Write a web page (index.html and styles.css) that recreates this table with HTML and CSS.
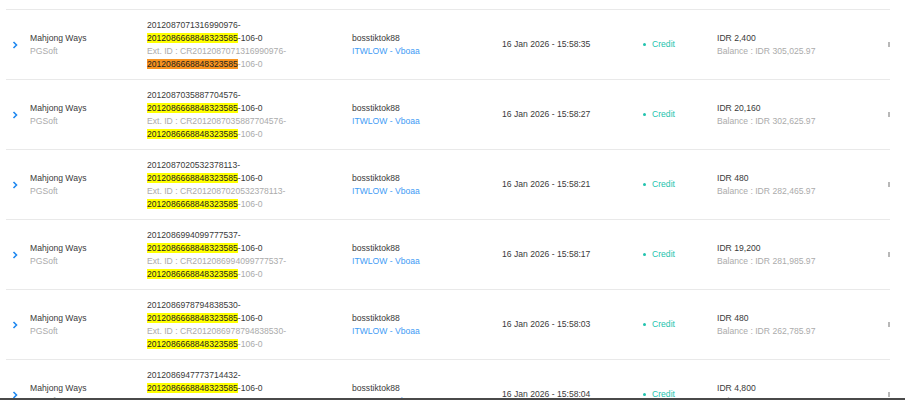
FILE: index.html
```html
<!DOCTYPE html>
<html>
<head>
<meta charset="utf-8">
<link rel="stylesheet" href="styles.css">
</head>
<body>
<div class="viewport">
  <div class="table">
    <div class="row">
      <div class="cell expand"><svg class="chev" viewBox="0 0 6 8" width="6" height="8"><polyline points="1.5,1 4.5,4 1.5,7" fill="none" stroke="#1e88f0" stroke-width="1.6"/></svg></div>
      <div class="cell"><div class="main">Mahjong Ways</div><div class="sub">PGSoft</div></div>
      <div class="cell"><div class="main">2012087071316990976-<br><mark>2012086668848323585</mark>-106-0</div><div class="sub">Ext. ID : CR2012087071316990976-<br><mark class="orange">2012086668848323585</mark>-106-0</div></div>
      <div class="cell"><div class="main">bosstiktok88</div><div class="link">ITWLOW - Vboaa</div></div>
      <div class="cell"><div class="main">16 Jan 2026 - 15:58:35</div></div>
      <div class="cell"><div class="status"><span class="dot"></span>Credit</div></div>
      <div class="cell"><div class="main">IDR 2,400</div><div class="sub">Balance : IDR 305,025.97</div></div>
      <div class="cell"><span class="action"></span></div>
    </div>
    <div class="row">
      <div class="cell expand"><svg class="chev" viewBox="0 0 6 8" width="6" height="8"><polyline points="1.5,1 4.5,4 1.5,7" fill="none" stroke="#1e88f0" stroke-width="1.6"/></svg></div>
      <div class="cell"><div class="main">Mahjong Ways</div><div class="sub">PGSoft</div></div>
      <div class="cell"><div class="main">2012087035887704576-<br><mark>2012086668848323585</mark>-106-0</div><div class="sub">Ext. ID : CR2012087035887704576-<br><mark>2012086668848323585</mark>-106-0</div></div>
      <div class="cell"><div class="main">bosstiktok88</div><div class="link">ITWLOW - Vboaa</div></div>
      <div class="cell"><div class="main">16 Jan 2026 - 15:58:27</div></div>
      <div class="cell"><div class="status"><span class="dot"></span>Credit</div></div>
      <div class="cell"><div class="main">IDR 20,160</div><div class="sub">Balance : IDR 302,625.97</div></div>
      <div class="cell"><span class="action"></span></div>
    </div>
    <div class="row">
      <div class="cell expand"><svg class="chev" viewBox="0 0 6 8" width="6" height="8"><polyline points="1.5,1 4.5,4 1.5,7" fill="none" stroke="#1e88f0" stroke-width="1.6"/></svg></div>
      <div class="cell"><div class="main">Mahjong Ways</div><div class="sub">PGSoft</div></div>
      <div class="cell"><div class="main">2012087020532378113-<br><mark>2012086668848323585</mark>-106-0</div><div class="sub">Ext. ID : CR2012087020532378113-<br><mark>2012086668848323585</mark>-106-0</div></div>
      <div class="cell"><div class="main">bosstiktok88</div><div class="link">ITWLOW - Vboaa</div></div>
      <div class="cell"><div class="main">16 Jan 2026 - 15:58:21</div></div>
      <div class="cell"><div class="status"><span class="dot"></span>Credit</div></div>
      <div class="cell"><div class="main">IDR 480</div><div class="sub">Balance : IDR 282,465.97</div></div>
      <div class="cell"><span class="action"></span></div>
    </div>
    <div class="row">
      <div class="cell expand"><svg class="chev" viewBox="0 0 6 8" width="6" height="8"><polyline points="1.5,1 4.5,4 1.5,7" fill="none" stroke="#1e88f0" stroke-width="1.6"/></svg></div>
      <div class="cell"><div class="main">Mahjong Ways</div><div class="sub">PGSoft</div></div>
      <div class="cell"><div class="main">2012086994099777537-<br><mark>2012086668848323585</mark>-106-0</div><div class="sub">Ext. ID : CR2012086994099777537-<br><mark>2012086668848323585</mark>-106-0</div></div>
      <div class="cell"><div class="main">bosstiktok88</div><div class="link">ITWLOW - Vboaa</div></div>
      <div class="cell"><div class="main">16 Jan 2026 - 15:58:17</div></div>
      <div class="cell"><div class="status"><span class="dot"></span>Credit</div></div>
      <div class="cell"><div class="main">IDR 19,200</div><div class="sub">Balance : IDR 281,985.97</div></div>
      <div class="cell"><span class="action"></span></div>
    </div>
    <div class="row">
      <div class="cell expand"><svg class="chev" viewBox="0 0 6 8" width="6" height="8"><polyline points="1.5,1 4.5,4 1.5,7" fill="none" stroke="#1e88f0" stroke-width="1.6"/></svg></div>
      <div class="cell"><div class="main">Mahjong Ways</div><div class="sub">PGSoft</div></div>
      <div class="cell"><div class="main">2012086978794838530-<br><mark>2012086668848323585</mark>-106-0</div><div class="sub">Ext. ID : CR2012086978794838530-<br><mark>2012086668848323585</mark>-106-0</div></div>
      <div class="cell"><div class="main">bosstiktok88</div><div class="link">ITWLOW - Vboaa</div></div>
      <div class="cell"><div class="main">16 Jan 2026 - 15:58:03</div></div>
      <div class="cell"><div class="status"><span class="dot"></span>Credit</div></div>
      <div class="cell"><div class="main">IDR 480</div><div class="sub">Balance : IDR 262,785.97</div></div>
      <div class="cell"><span class="action"></span></div>
    </div>
    <div class="row">
      <div class="cell expand"><svg class="chev" viewBox="0 0 6 8" width="6" height="8"><polyline points="1.5,1 4.5,4 1.5,7" fill="none" stroke="#1e88f0" stroke-width="1.6"/></svg></div>
      <div class="cell"><div class="main">Mahjong Ways</div><div class="sub">PGSoft</div></div>
      <div class="cell"><div class="main">2012086947773714432-<br><mark>2012086668848323585</mark>-106-0</div><div class="sub">Ext. ID : CR2012086947773714432-<br><mark>2012086668848323585</mark>-106-0</div></div>
      <div class="cell"><div class="main">bosstiktok88</div><div class="link">ITWLOW - Vboaa</div></div>
      <div class="cell"><div class="main">16 Jan 2026 - 15:58:04</div></div>
      <div class="cell"><div class="status"><span class="dot"></span>Credit</div></div>
      <div class="cell"><div class="main">IDR 4,800</div><div class="sub">Balance : IDR 257,985.97</div></div>
      <div class="cell"><span class="action"></span></div>
    </div>
  </div>
</div>
<div class="scroll-edge"></div>
</body>
</html>
```
FILE: styles.css
```css
html, body {
  margin: 0;
  padding: 0;
  background: #fff;
}
body {
  font-family: "Liberation Sans", Arial, sans-serif;
  font-size: 8.6px;
  line-height: 13px;
  color: #3a3a3a;
}
.viewport {
  height: 398px;
  overflow: hidden;
  padding-left: 6px;
  width: 884px;
}
.table {
  margin-top: 9px;
  width: 884px;
  overflow: hidden;
}
.row {
  display: grid;
  grid-template-columns: 24px 117px 205px 150px 141px 74px 171px 40px;
  height: 70px;
  box-sizing: border-box;
  border-top: 1px solid #e9e9e9;
}
.cell {
  display: flex;
  flex-direction: column;
  justify-content: center;
  white-space: nowrap;
}
.expand {
  padding-left: 6px;
}
.chev {
  display: block;
}
.main {
  color: #3a3a3a;
}
.sub {
  color: #ababab;
}
.link {
  color: #3f9cf5;
}
mark {
  background: #ffff00;
  color: #222;
}
mark.orange {
  background: #f7931e;
}
.status {
  color: #22c3ae;
  display: flex;
  align-items: center;
}
.dot {
  width: 3px;
  height: 3px;
  border-radius: 50%;
  background: #22c3ae;
  margin-right: 6px;
}
.action {
  display: block;
  width: 2px;
  height: 5px;
  background: #b8b8b8;
  margin-left: 0;
}
.scroll-edge {
  height: 2px;
  background: #4a4a4a;
  width: 905px;
}
```
